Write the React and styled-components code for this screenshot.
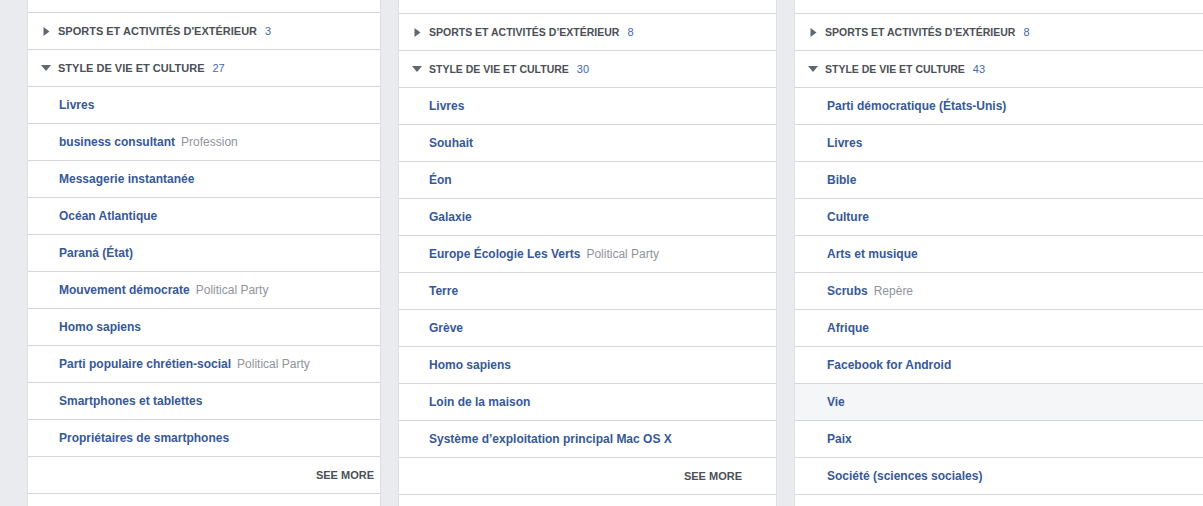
import React from "react";
import styled, { createGlobalStyle } from "styled-components";

const GlobalStyle = createGlobalStyle`
  html, body {
    margin: 0;
    padding: 0;
    background: #e9ebee;
    overflow: hidden;
  }
  body {
    font-family: "Liberation Sans", Arial, Helvetica, sans-serif;
    -webkit-font-smoothing: antialiased;
  }
`;

const Page = styled.div`
  display: flex;
  align-items: flex-start;
  gap: 17px;
  padding-left: 27px;
  height: 506px;
  width: 1203px;
  box-sizing: border-box;
  overflow: hidden;
`;

const Panel = styled.div`
  flex: 0 0 ${(p) => p.width}px;
  width: ${(p) => p.width}px;
  height: 506px;
  box-sizing: border-box;
  background: #fff;
  border-left: 1px solid #dddfe2;
  border-right: ${(p) => (p.noRight ? "none" : "1px solid #dddfe2")};
  padding-top: ${(p) => p.top}px;
  overflow: hidden;
`;

const Row = styled.div`
  height: 36px;
  border-top: 1px solid #d3d6db;
  display: flex;
  align-items: center;
  box-sizing: content-box;
  background: ${(p) => (p.active ? "#f5f6f7" : "#fff")};
`;

const Header = styled(Row)`
  padding-left: 12px;
`;

const Caret = styled.span`
  width: 12px;
  height: 12px;
  margin-right: 6px;
  display: flex;
  align-items: center;
  justify-content: center;
`;

const HeaderLabel = styled.span`
  font-size: ${(p) => p.size}px;
  font-weight: bold;
  text-transform: uppercase;
  color: #4b4f56;
`;

const Count = styled.span`
  font-size: 11px;
  color: #4267b2;
  margin-left: 8px;
`;

const Item = styled(Row)`
  padding-left: ${(p) => p.indent}px;
`;

const ItemName = styled.a`
  font-size: 12px;
  font-weight: bold;
  color: #365899;
  text-decoration: none;
  white-space: nowrap;
`;

const ItemMeta = styled.span`
  font-size: 12px;
  color: #90949c;
  margin-left: 6px;
  white-space: nowrap;
`;

const SeeMoreRow = styled(Row)`
  justify-content: flex-end;
  padding-right: ${(p) => p.pad}px;
`;

const SeeMore = styled.span`
  font-size: 11px;
  font-weight: bold;
  color: #4b4f56;
  text-transform: uppercase;
`;

const BottomRow = styled.div`
  border-top: 1px solid #d3d6db;
  height: 40px;
`;

const CaretRight = () => (
  <svg width="7" height="9" viewBox="0 0 7 9">
    <path d="M0.5 0 L6.5 4.5 L0.5 9 Z" fill="#606770" />
  </svg>
);

const CaretDown = () => (
  <svg width="10" height="6" viewBox="0 0 10 6">
    <path d="M0 0 L10 0 L5 6 Z" fill="#606770" />
  </svg>
);

const columns = [
  {
    width: 354,
    top: 12,
    apos: "'",
    headSize: 11,
    indent: 31,
    sports: 3,
    style: 27,
    seeMore: 6,
    items: [
      ["Livres"],
      ["business consultant", "Profession"],
      ["Messagerie instantanée"],
      ["Océan Atlantique"],
      ["Paraná (État)"],
      ["Mouvement démocrate", "Political Party"],
      ["Homo sapiens"],
      ["Parti populaire chrétien-social", "Political Party"],
      ["Smartphones et tablettes"],
      ["Propriétaires de smartphones"],
    ],
  },
  {
    width: 379,
    top: 13,
    apos: "’",
    headSize: 10.5,
    indent: 30,
    sports: 8,
    style: 30,
    seeMore: 34,
    items: [
      ["Livres"],
      ["Souhait"],
      ["Éon"],
      ["Galaxie"],
      ["Europe Écologie Les Verts", "Political Party"],
      ["Terre"],
      ["Grève"],
      ["Homo sapiens"],
      ["Loin de la maison"],
      ["Système d’exploitation principal Mac OS X"],
    ],
  },
  {
    width: 420,
    top: 13,
    apos: "’",
    headSize: 10.5,
    indent: 32,
    sports: 8,
    style: 43,
    noRight: true,
    items: [
      ["Parti démocratique (États-Unis)"],
      ["Livres"],
      ["Bible"],
      ["Culture"],
      ["Arts et musique"],
      ["Scrubs", "Repère"],
      ["Afrique"],
      ["Facebook for Android"],
      ["Vie", null, true],
      ["Paix"],
      ["Société (sciences sociales)"],
    ],
  },
];

const Column = ({ col }) => (
  <Panel width={col.width} top={col.top} noRight={col.noRight}>
    <Header>
      <Caret>
        <CaretRight />
      </Caret>
      <HeaderLabel size={col.headSize}>
        Sports et activités d{col.apos}extérieur
      </HeaderLabel>
      <Count>{col.sports}</Count>
    </Header>
    <Header>
      <Caret>
        <CaretDown />
      </Caret>
      <HeaderLabel size={col.headSize}>Style de vie et culture</HeaderLabel>
      <Count>{col.style}</Count>
    </Header>
    {col.items.map(([name, meta, active], i) => (
      <Item key={i} active={active} indent={col.indent}>
        <ItemName href="#">{name}</ItemName>
        {meta && <ItemMeta>{meta}</ItemMeta>}
      </Item>
    ))}
    {col.seeMore !== undefined && (
      <SeeMoreRow pad={col.seeMore}>
        <SeeMore>See more</SeeMore>
      </SeeMoreRow>
    )}
    <BottomRow />
  </Panel>
);

export default function App() {
  return (
    <>
      <GlobalStyle />
      <Page>
        {columns.map((col, i) => (
          <Column key={i} col={col} />
        ))}
      </Page>
    </>
  );
}
